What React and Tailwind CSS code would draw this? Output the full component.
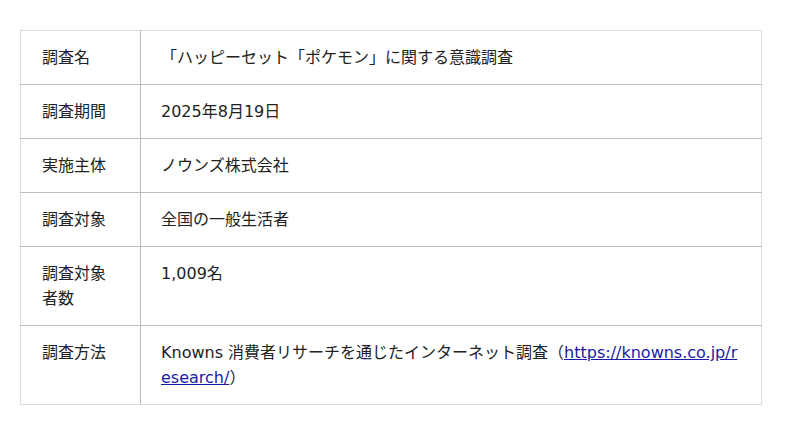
import React from 'react';

const rows = [
  { label: '調査名', value: '「ハッピーセット「ポケモン」に関する意識調査' },
  { label: '調査期間', value: '2025年8月19日' },
  { label: '実施主体', value: 'ノウンズ株式会社' },
  { label: '調査対象', value: '全国の一般生活者' },
  { label: '調査対象者数', value: '1,009名' },
];

const App = () => {
  return (
    <div className="bg-white w-[800px] h-[435px] px-5 pt-[30px] text-[16px] leading-[25px] text-[#222] [font-family:'DejaVu_Sans','Noto_Sans_CJK_JP',sans-serif]">
      <table className="w-[742px] border-collapse border border-[#dcdcdc] table-fixed">
        <tbody>
          {rows.map((r) => (
            <tr key={r.label} className="border-b border-[#bdbdbd]">
              <td className="w-[120px] pl-[21px] pr-5 py-[14px] align-top border-r border-[#bdbdbd]">{r.label}</td>
              <td className="px-5 py-[14px] align-top">{r.value}</td>
            </tr>
          ))}
          <tr>
            <td className="w-[120px] pl-[21px] pr-5 py-[14px] align-top border-r border-[#bdbdbd]">調査方法</td>
            <td className="px-5 py-[14px] align-top break-all">
              Knowns 消費者リサーチを通じたインターネット調査（<a href="#" className="text-[#1a1aa6] underline">https://knowns.co.jp/research/</a>）
            </td>
          </tr>
        </tbody>
      </table>
    </div>
  );
};

export default App;
